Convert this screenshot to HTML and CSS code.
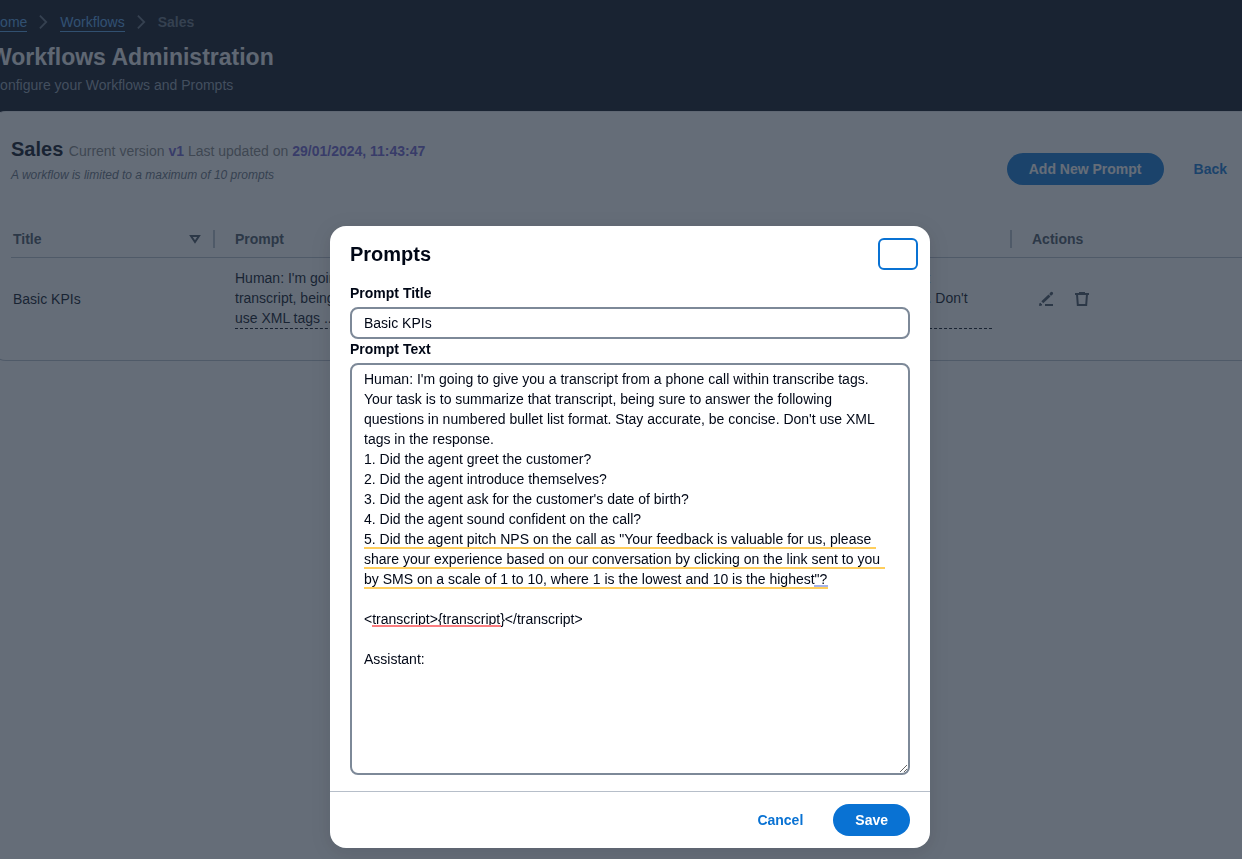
FILE: index.html
```html
<!DOCTYPE html>
<html lang="en">
<head>
<meta charset="utf-8">
<title>Workflows Administration</title>
<link rel="stylesheet" href="styles.css">
</head>
<body>
<div class="page">
  <header class="page-header">
    <nav class="breadcrumbs" aria-label="Breadcrumbs">
      <a href="#">Home</a>
      <svg class="chevron" viewBox="0 0 10 16" aria-hidden="true"><path d="M1 1l7 7-7 7"/></svg>
      <a href="#">Workflows</a>
      <svg class="chevron" viewBox="0 0 10 16" aria-hidden="true"><path d="M1 1l7 7-7 7"/></svg>
      <span class="current">Sales</span>
    </nav>
    <h1>Workflows Administration</h1>
    <p>Configure your Workflows and Prompts</p>
  </header>
  <main class="container">
    <div class="container-header">
      <div class="heading">
        <h2>Sales <small>Current version <b>v1</b> Last updated on <b>29/01/2024, 11:43:47</b></small></h2>
        <p>A workflow is limited to a maximum of 10 prompts</p>
      </div>
      <div class="actions">
        <button class="btn primary" type="button">Add New Prompt</button>
        <button class="btn link" type="button">Back</button>
      </div>
    </div>
    <table class="prompts">
      <colgroup><col class="col-title"><col class="col-prompt"><col class="col-actions"></colgroup>
      <thead>
        <tr>
          <th scope="col"><div class="th">Title
            <svg class="sort" viewBox="0 0 12 10" aria-hidden="true"><path d="M2 2h8L6 8z"/></svg></div></th>
          <th scope="col"><div class="th">Prompt</div></th>
          <th scope="col"><div class="th">Actions</div></th>
        </tr>
      </thead>
      <tbody>
        <tr>
          <td>Basic KPIs</td>
          <td><div class="preview">Human: I'm going to give you a transcript from a phone call within transcribe tags. Your task is to summarize that transcript, being sure to answer the following questions in numbered bullet list format. Stay accurate, be concise. Don't use XML tags ...</div></td>
          <td>
            <div class="row-actions">
              <button class="icon-btn" type="button" aria-label="Edit">
                <svg viewBox="0 0 16 16" aria-hidden="true"><path d="M4.300 11.300L11.500 4.500" stroke-width="2.800"/><path d="M13 3l.6-.6" stroke-width="3" stroke-linecap="round"/><path d="M1.500 14.500l.6-2.500 1.900 1.900z" class="solid"/><path d="M7 14h8" stroke-width="2"/></svg>
              </button>
              <button class="icon-btn" type="button" aria-label="Delete">
                <svg viewBox="0 0 16 16" aria-hidden="true"><path d="M1 3h14M5 2h6M3 3l.8 11h8.400L13 3" stroke-width="2"/></svg>
              </button>
            </div>
          </td>
        </tr>
      </tbody>
    </table>
  </main>
</div>

<div class="overlay">
  <form class="modal" role="dialog" aria-modal="true" aria-labelledby="modal-title">
    <div class="modal-header">
      <h2 id="modal-title">Prompts</h2>
      <button class="close" type="button" aria-label="Close"></button>
    </div>
    <div class="modal-body">
      <label for="prompt-title">Prompt Title</label>
      <input id="prompt-title" type="text" value="Basic KPIs">
      <label for="prompt-text">Prompt Text</label>
      <div class="editor">
        <textarea id="prompt-text" spellcheck="false">Human: I'm going to give you a transcript from a phone call within transcribe tags. Your task is to summarize that transcript, being sure to answer the following questions in numbered bullet list format. Stay accurate, be concise. Don't use XML tags in the response.
1. Did the agent greet the customer?
2. Did the agent introduce themselves?
3. Did the agent ask for the customer's date of birth?
4. Did the agent sound confident on the call?
5. Did the agent pitch NPS on the call as "Your feedback is valuable for us, please share your experience based on our conversation by clicking on the link sent to you by SMS on a scale of 1 to 10, where 1 is the lowest and 10 is the highest"?

&lt;transcript&gt;{transcript}&lt;/transcript&gt;

Assistant:</textarea>
        <svg class="marks" aria-hidden="true">
          <g class="clarity"><rect x="14" y="184" width="512" height="2"/><rect x="14" y="204" width="521" height="2"/><rect x="14" y="224" width="464" height="2"/></g>
          <rect class="style" x="464" y="222" width="14" height="2"/>
          <rect class="spelling" x="22" y="262" width="129" height="2"/>
        </svg>
      </div>
    </div>
    <div class="modal-footer">
      <button class="btn link" type="button">Cancel</button>
      <button class="btn primary" type="submit">Save</button>
    </div>
  </form>
</div>
</body>
</html>
```
FILE: styles.css
```css
* { box-sizing: border-box; }
body {
  margin: 0;
  min-height: 100vh;
  overflow: hidden;
  background: #fff;
  color: #000716;
  font: 14px/20px "Liberation Sans", Arial, sans-serif;
}
h1, h2, p { margin: 0; }
button, input, textarea { font: inherit; color: inherit; }
svg { fill: none; stroke: currentColor; }

.page {
  margin: 0 -28px 0 -10px;
  background: linear-gradient(#000716, #000716) top / 100% 127px no-repeat;
}
.page-header { padding: 12px 0 16px; color: #8d99a8; }
.breadcrumbs { display: flex; align-items: center; gap: 12px; }
.breadcrumbs a {
  color: #539fe5;
  line-height: 18px;
  text-decoration: none;
  border-bottom: 1px solid;
}
.breadcrumbs .current { color: #5f6b7a; font-weight: 700; }
.chevron { width: 9px; height: 16px; color: #5f6b7a; stroke-width: 2; }
.page-header h1 { margin-top: 10px; font-size: 23px; line-height: 30px; color: #e9ebed; }
.page-header p { margin-top: 3px; }

.container {
  padding: 20px;
  background: #fff;
  border: 1px solid #b6bec9;
  border-top-color: #e9ebed;
  border-radius: 16px;
}
.container-header { display: flex; justify-content: space-between; padding: 4px 0 36px; }
.heading h2 { font-size: 20px; line-height: 26px; }
.heading small { font-size: 14px; font-weight: 400; color: #808080; }
.heading b { color: #6a5acd; }
.heading p { margin-top: 1px; font-size: 12px; font-style: italic; color: #5f6b7a; }
.actions { display: flex; align-items: center; gap: 8px; padding-top: 16px; }

.btn {
  height: 32px;
  padding: 0 22px;
  border: 0;
  border-radius: 16px;
  font-weight: 700;
  line-height: 20px;
}
.btn.primary { background: #0972d3; color: #fff; }
.btn.link { background: none; color: #0972d3; }

.prompts { width: 100%; table-layout: fixed; border-collapse: collapse; }
.col-title { width: 204px; }
.col-prompt { width: 797px; }
.prompts th { padding: 9px 0; border-bottom: 1px solid #b6bec9; text-align: left; color: #414d5c; }
.th { display: flex; align-items: center; justify-content: space-between; padding: 0 14px 0 20px; height: 18px; }
th:not(:last-child) .th { border-right: 2px solid #b6bec9; }
th:first-child .th { padding-left: 2px; padding-right: 12px; }
.sort { width: 12px; height: 10px; stroke-width: 2; }
.prompts td { padding: 10px 20px 11px; }
.prompts td:first-child { padding-left: 2px; }
.prompts td:last-child { padding-left: 18px; }
.preview { border-bottom: 1px dashed; }
.row-actions { display: flex; gap: 4px; }
.icon-btn { width: 32px; height: 32px; padding: 8px; border: 0; background: none; color: #414d5c; }
.icon-btn svg { display: block; width: 16px; height: 16px; }
.icon-btn .solid { fill: currentColor; stroke-width: 1; }

.overlay {
  position: fixed;
  inset: 0;
  display: flex;
  align-items: flex-end;
  justify-content: center;
  padding: 11px 0 11px 18px;
  background: rgba(35, 47, 62, 0.7);
}
.modal {
  width: 600px;
  background: #fff;
  border-radius: 16px;
  box-shadow: 0 4px 20px 1px rgba(0, 7, 22, 0.1);
}
.modal-header { display: flex; align-items: center; justify-content: space-between; padding: 12px 12px 10px 20px; }
.modal-header h2 { font-size: 20px; line-height: 32px; }
.close { width: 40px; height: 32px; border: 2px solid #0972d3; border-radius: 6px; background: #fff; }
.modal-body { padding: 3px 20px 16px; }
.modal-body label { display: block; padding: 0 0 4px; font-weight: 700; }
.modal-body input, .modal-body textarea {
  display: block;
  width: 100%;
  border: 2px solid #7d8998;
  border-radius: 8px;
  background: #fff;
  outline: 0;
}
.modal-body input { height: 32px; padding: 4px 12px; }
.modal-body textarea { height: 412px; padding: 4px 16px 4px 12px; resize: vertical; }
.editor { position: relative; }
.marks { position: absolute; top: 0; left: 0; width: 100%; height: 300px; pointer-events: none; stroke: none; }
.clarity { fill: #ffce5c; }
.style { fill: #a5b2e8; }
.spelling { fill: #fb7d80; }
.modal-footer {
  display: flex;
  justify-content: flex-end;
  gap: 8px;
  padding: 12px 20px;
  border-top: 1px solid #b6bec9;
}
```
